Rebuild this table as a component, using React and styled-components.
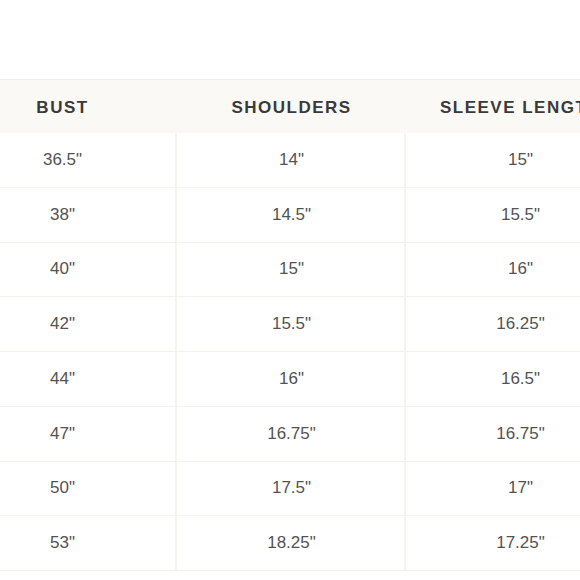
import React from "react";
import styled, { createGlobalStyle } from "styled-components";

const Global = createGlobalStyle`
  html, body { margin: 0; padding: 0; background: #ffffff; }
  body { font-family: "Liberation Sans", Arial, sans-serif; }
`;

const Page = styled.div`
  width: 580px;
  height: 580px;
  overflow: hidden;
  padding-top: 79px;
  box-sizing: border-box;
  background: #ffffff;
`;

const Table = styled.div`
  margin-left: -52px;
  width: 687px;
  display: grid;
  grid-template-columns: 229px 229px 229px;
  border-top: 1px solid #efeee9;
`;

const HeadCell = styled.div`
  height: 53px;
  display: flex;
  align-items: center;
  justify-content: center;
  background: #faf9f6;
  color: #3a3a3a;
  font-size: 17px;
  font-weight: 700;
  letter-spacing: 1.5px;
  white-space: nowrap;
  overflow: hidden;
  padding-top: 2px;
  box-sizing: border-box;
`;

const Cell = styled.div`
  height: 54.75px;
  box-sizing: border-box;
  display: flex;
  align-items: center;
  justify-content: center;
  color: #535353;
  font-size: 17px;
  border-bottom: 1.5px solid #f2f1ec;
  border-right: ${(p) => (p.$last ? "none" : "2px solid #f4f3ee")};
  padding-left: ${(p) => (p.$last ? "0" : "2px")};
`;

const headers = ["BUST", "SHOULDERS", "SLEEVE LENGTH"];
const rows = [
  ["36.5\"", "14\"", "15\""],
  ["38\"", "14.5\"", "15.5\""],
  ["40\"", "15\"", "16\""],
  ["42\"", "15.5\"", "16.25\""],
  ["44\"", "16\"", "16.5\""],
  ["47\"", "16.75\"", "16.75\""],
  ["50\"", "17.5\"", "17\""],
  ["53\"", "18.25\"", "17.25\""],
];

export default function App() {
  return (
    <Page>
      <Global />
      <Table>
        {headers.map((h) => (
          <HeadCell key={h}>{h}</HeadCell>
        ))}
        {rows.map((r, i) =>
          r.map((v, j) => (
            <Cell key={`${i}-${j}`} $last={j === r.length - 1 ? 1 : 0}>
              {v}
            </Cell>
          ))
        )}
      </Table>
    </Page>
  );
}
